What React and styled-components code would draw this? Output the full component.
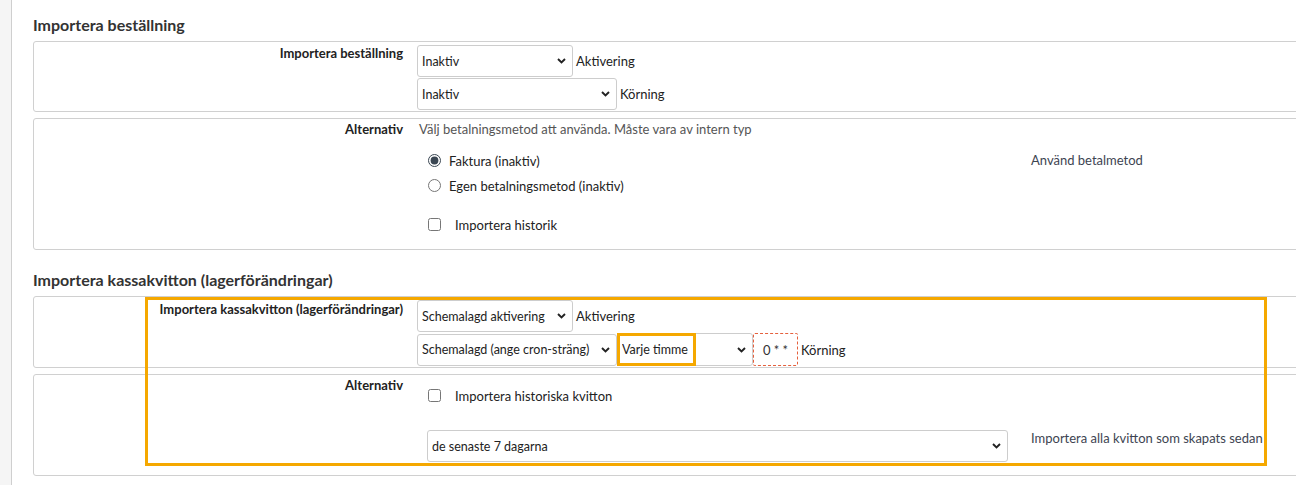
import styled, { createGlobalStyle } from "styled-components";

const GlobalStyle = createGlobalStyle`
  html, body {
    margin: 0;
    padding: 0;
    background: #fff;
    font-family: Lato, "Open Sans", "Liberation Sans", sans-serif;
    color: #222;
    overflow: hidden;
  }
`;

const Page = styled.div`
  display: flex;
  min-height: 485px;
`;

const Sidebar = styled.div`
  width: 11px;
  flex-shrink: 0;
  background: #f5f5f5;
  border-right: 1px solid #cfcfcf;
`;

const Main = styled.main`
  flex: 1;
  padding: 15px 0 0 21px;
  overflow: hidden;
`;

const Section = styled.section`
  & + & {
    padding-top: 14px;
  }
`;

const SectionTitle = styled.h2`
  margin: 0 0 6px;
  font-size: 16px;
  font-weight: 700;
  line-height: 20px;
  color: #333;
`;

const Highlighted = styled.div`
  position: relative;
`;

const Marker = styled.div`
  position: absolute;
  top: ${(p) => p.$top}px;
  left: ${(p) => p.$left}px;
  width: ${(p) => p.$width}px;
  height: ${(p) => p.$height}px;
  box-sizing: border-box;
  border: 3px solid #f5a800;
  pointer-events: none;
`;

const Card = styled.div`
  display: grid;
  grid-template-columns: 370px 1fr;
  column-gap: 13px;
  width: 1300px;
  border: 1px solid #d0d0d0;
  border-radius: 3px;
  padding: ${(p) => p.$pad};
  margin-bottom: 6px;
`;

const Label = styled.div`
  text-align: right;
  padding-right: 1px;
  font-size: 13px;
  font-weight: 700;
  line-height: 16px;
  color: #222;
  padding-top: ${(p) => p.$top || 0}px;
`;

const Content = styled.div`
  display: flex;
  flex-direction: column;
  gap: ${(p) => p.$gap || 0}px;
`;

const Line = styled.div`
  display: flex;
  align-items: center;
  gap: 3px;
  font-size: 13px;
  color: #222;
`;

const Joined = styled.span`
  display: inline-flex;
  align-items: center;
`;

const SelectWrap = styled.span`
  position: relative;
  display: inline-flex;
  width: ${(p) => p.$width}px;
  height: ${(p) => p.$height || 32}px;
  flex-shrink: 0;
`;

const NativeSelect = styled.select`
  appearance: none;
  width: 100%;
  height: 100%;
  box-sizing: border-box;
  border: 1px solid #cdcdcd;
  border-radius: 3px;
  background: #fff;
  padding: 0 18px 0 4px;
  font-family: inherit;
  font-size: 12.5px;
  color: #222;
  outline: none;
`;

const Chevron = styled.svg`
  position: absolute;
  right: 7px;
  top: 50%;
  transform: translateY(-50%);
  pointer-events: none;
`;

const CronBox = styled.div`
  display: flex;
  align-items: center;
  justify-content: center;
  width: 45px;
  height: 33px;
  box-sizing: border-box;
  border: 1px dashed #e5603d;
  border-radius: 2px;
  font-size: 13px;
  color: #333;
`;

const Description = styled.div`
  font-size: 13px;
  line-height: 16px;
  color: #555;
  padding-left: 2px;
`;

const OptionGrid = styled.div`
  display: grid;
  grid-template-columns: 600px 1fr;
  column-gap: 14px;
  margin-top: ${(p) => p.$top || 0}px;
`;

const OptionList = styled.div`
  display: flex;
  flex-direction: column;
  padding-left: ${(p) => p.$indent || 11}px;
`;

const Choice = styled.label`
  display: flex;
  align-items: center;
  gap: ${(p) => p.$gap || 8}px;
  height: 25px;
  font-size: 13px;
  color: #222;

  input {
    margin: 0;
    width: 13px;
    height: 13px;
    accent-color: #3b4753;
  }
`;

const Help = styled.div`
  font-size: 13px;
  line-height: ${(p) => p.$lh || 25}px;
  color: #3d4451;
`;

const Select = ({ width, height, value, children }) => (
  <SelectWrap $width={width} $height={height}>
    <NativeSelect defaultValue={value}>
      <option>{value}</option>
    </NativeSelect>
    <Chevron width="9" height="6" viewBox="0 0 9 6">
      <path d="M1 1l3.5 3.5L8 1" fill="none" stroke="#222" strokeWidth="1.9" />
    </Chevron>
    {children}
  </SelectWrap>
);

export default function App() {
  return (
    <>
      <GlobalStyle />
      <Page>
        <Sidebar />
        <Main>
          <Section>
            <SectionTitle>Importera beställning</SectionTitle>
            <Card $pad="3px 0 1px">
              <Label>Importera beställning</Label>
              <Content $gap={1}>
                <Line>
                  <Select width={156} value="Inaktiv" />
                  Aktivering
                </Line>
                <Line>
                  <Select width={200} value="Inaktiv" />
                  Körning
                </Line>
              </Content>
            </Card>
            <Card $pad="2px 0 12px">
              <Label>Alternativ</Label>
              <Content>
                <Description>
                  Välj betalningsmetod att använda. Måste vara av intern typ
                </Description>
                <OptionGrid $top={11}>
                  <OptionList>
                    <Choice>
                      <input type="radio" name="pay" defaultChecked />
                      Faktura (inaktiv)
                    </Choice>
                    <Choice>
                      <input type="radio" name="pay" />
                      Egen betalningsmetod (inaktiv)
                    </Choice>
                  </OptionList>
                  <Help>Använd betalmetod</Help>
                </OptionGrid>
                <OptionGrid $top={14}>
                  <OptionList>
                    <Choice $gap={14}>
                      <input type="checkbox" />
                      Importera historik
                    </Choice>
                  </OptionList>
                </OptionGrid>
              </Content>
            </Card>
          </Section>

          <Section>
            <SectionTitle>Importera kassakvitton (lagerförändringar)</SectionTitle>
            <Highlighted>
              <Card $pad="3px 0 1px">
                <Label $top={1}>Importera kassakvitton (lagerförändringar)</Label>
                <Content $gap={1}>
                  <Line>
                    <Select width={156} value="Schemalagd aktivering" />
                    Aktivering
                  </Line>
                  <Line>
                    <Joined>
                      <Select width={200} value="Schemalagd (ange cron-sträng)" />
                      <Select width={136} height={33} value="Varje timme">
                        <Marker $top={0} $left={0} $width={79} $height={33} />
                      </Select>
                      <CronBox>0 * *</CronBox>
                    </Joined>
                    Körning
                  </Line>
                </Content>
              </Card>
              <Card $pad="2px 0 13px">
                <Label>Alternativ</Label>
                <Content>
                  <OptionGrid $top={6}>
                    <OptionList>
                      <Choice $gap={14}>
                        <input type="checkbox" />
                        Importera historiska kvitton
                      </Choice>
                    </OptionList>
                  </OptionGrid>
                  <OptionGrid $top={22}>
                    <OptionList $indent={10}>
                      <Select width={581} height={32} value="de senaste 7 dagarna" />
                    </OptionList>
                    <Help $lh={16}>Importera alla kvitton som skapats sedan</Help>
                  </OptionGrid>
                </Content>
              </Card>
              <Marker $top={1} $left={112} $width={1122} $height={169} />
            </Highlighted>
          </Section>
        </Main>
      </Page>
    </>
  );
}
